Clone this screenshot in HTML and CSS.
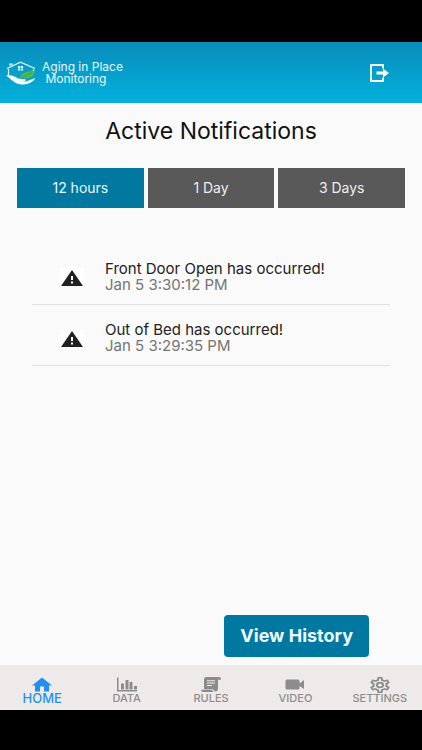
FILE: index.html
```html
<!DOCTYPE html>
<html lang="en">
<head>
<meta charset="utf-8">
<meta name="viewport" content="width=device-width, initial-scale=1">
<title>Aging in Place Monitoring</title>
<link rel="stylesheet" href="styles.css">
</head>
<body>
<div class="app">
  <header class="header">
    <a class="brand" href="#">
      <svg class="logo" viewBox="0 0 30 24" aria-hidden="true">
        <path d="M1 7.500 14.500 1.200 29 7.500M4 4.800V3H6V4.200M2.500 8V14.500M27.500 8V11" fill="none" stroke="#e9fbff" stroke-width="1.200"/>
        <path d="M12 5h2.200v2H12zm2.900 0h2.200v2h-2.200zM12 7.600h2.200v2H12zm2.900 0h2.200v2h-2.200z" fill="#e9fbff"/>
        <path d="M14 16.500C15 12 19 11 28.500 9.500 29 15 24 18.500 17 17z" fill="#54b948"/>
        <path d="M16 16.500Q21 15 26 11.500" fill="none" stroke="#2b8c52" stroke-width=".6"/>
        <path d="M0 14.500C5 13.500 9 15 12 17.500L19 18.200C20.500 18.800 20 20 18 20L13 19.600 20 20.600 29 17C28 21 22 23.500 16 23.500 8 23.500 6 18 0 14.500z" fill="#f4fdff"/>
      </svg>
      <span class="brand-name">Aging in Place<br>&nbsp;Monitoring</span>
    </a>
    <button class="logout" type="button" aria-label="Log out">
      <svg viewBox="0 0 20 18" aria-hidden="true">
        <path d="M13 4.500V1H1V17H13V13.500" fill="none" stroke="#fff" stroke-width="1.800" stroke-linejoin="round"/>
        <path d="M6.500 7.500H13V4.500L19 9 13 13.500V10.500H6.500z" fill="#fff"/>
      </svg>
    </button>
  </header>
  <main class="main">
    <h1 class="title">Active Notifications</h1>
    <div class="ranges">
      <button class="range active" type="button">12 hours</button>
      <button class="range" type="button">1 Day</button>
      <button class="range" type="button">3 Days</button>
    </div>
    <ul class="list">
      <li class="item">
        <span class="alert"><svg viewBox="0 0 22 16" aria-hidden="true"><path d="M0 16H22L11 0z" fill="#212121"/><path d="M10 6h2v4h-2zm0 5.500h2v2h-2z" fill="#fff"/></svg></span>
        <div class="text"><p class="event">Front Door Open has occurred!</p><p class="time">Jan 5 3:30:12 PM</p></div>
      </li>
      <li class="item">
        <span class="alert"><svg viewBox="0 0 22 16" aria-hidden="true"><path d="M0 16H22L11 0z" fill="#212121"/><path d="M10 6h2v4h-2zm0 5.500h2v2h-2z" fill="#fff"/></svg></span>
        <div class="text"><p class="event">Out of Bed has occurred!</p><p class="time">Jan 5 3:29:35 PM</p></div>
      </li>
    </ul>
    <button class="history" type="button">View History</button>
  </main>
  <nav class="tabs">
    <a class="tab current" href="#"><svg viewBox="0 0 20 14" aria-hidden="true"><path d="M10 0 20 8H17V14H12V9H8V14H3V8H0L10 0z"/></svg>HOME</a>
    <a class="tab" href="#"><svg viewBox="0 0 20 14" aria-hidden="true"><path d="M0 0H1.500V12.500H20V14H0zM4 6H7V12H4zM8.500 2.500H11.500V12H8.500zM12.500 4.500H15.500V12H12.500zM17 8.500H20V12H17z"/></svg>DATA</a>
    <a class="tab" href="#"><svg viewBox="0 -1 20 16" preserveAspectRatio="none" aria-hidden="true"><path d="M6-1H18Q20-1 20 1V2H17V11Q17 14.500 14 14.500L12 12H3V1.500Q3-1 6-1z"/><path d="M0 12.500H11Q11.500 15 14 15H3Q0 15 0 12.500z"/><path d="M6 3H14M6 5.500H14M6 8H11" fill="none" stroke="#eeeaea" stroke-width="1.100"/></svg>RULES</a>
    <a class="tab" href="#"><svg viewBox="0 0 20 14" aria-hidden="true"><path d="M2 2H13Q14.500 2 14.500 3.500V6L19 2.500V11.500L14.500 8.500V10.500Q14.500 12 13 12H2Q.5 12 .5 10.500V3.500Q.5 2 2 2z"/></svg>VIDEO</a>
    <a class="tab" href="#"><svg class="gear" viewBox="2 2 20 20" preserveAspectRatio="none" aria-hidden="true"><path d="M12 8a4 4 0 0 1 4 4 4 4 0 0 1-4 4 4 4 0 0 1-4-4 4 4 0 0 1 4-4m0 2a2 2 0 0 0-2 2 2 2 0 0 0 2 2 2 2 0 0 0 2-2 2 2 0 0 0-2-2m-2 12c-.25 0-.46-.18-.5-.42l-.37-2.650c-.63-.25-1.170-.59-1.690-.99l-2.490 1.010c-.22.08-.49 0-.61-.22l-2-3.460a.493.493 0 0 1 .12-.64l2.110-1.660L4.500 12l.07-1-2.110-1.630a.493.493 0 0 1-.12-.64l2-3.460c.12-.22.39-.31.61-.22l2.490 1c.52-.39 1.060-.73 1.690-.98l.37-2.650c.04-.24.25-.42.5-.42h4c.25 0 .46.18.5.42l.37 2.650c.63.25 1.170.59 1.690.98l2.490-1c.22-.09.49 0 .61.22l2 3.460c.13.22.07.49-.12.64L19.430 11l.07 1-.07 1 2.110 1.630c.19.15.25.42.12.64l-2 3.460c-.12.22-.39.31-.61.22l-2.490-1c-.52.39-1.060.73-1.690.98l-.37 2.650c-.04.24-.25.42-.5.42h-4m1.250-18l-.37 2.610c-1.200.25-2.260.89-3.030 1.780L5.440 7.350l-.75 1.300L6.800 10.200a6.400 6.400 0 0 0 0 3.600l-2.120 1.560.75 1.300 2.430-1.040c.77.88 1.820 1.520 3.010 1.760l.37 2.620h1.520l.37-2.610c1.190-.25 2.240-.89 3.010-1.770l2.430 1.040.75-1.300-2.120-1.550c.4-1.170.4-2.440 0-3.610l2.110-1.550-.75-1.300-2.410 1.040a5.420 5.420 0 0 0-3.030-1.770L12.750 4h-1.500z"/></svg>SETTINGS</a>
  </nav>
</div>
</body>
</html>
```
FILE: styles.css
```css
* { box-sizing: border-box; }

body {
  margin: 0;
  background: #000;
  font-family: Inter, Roboto, sans-serif;
}

button { border: 0; font: inherit; cursor: pointer; }
a { text-decoration: none; }
svg { display: block; }

.app {
  display: flex;
  flex-direction: column;
  min-height: 100vh;
  padding: 42px 0 40px;
}

.header {
  display: flex;
  align-items: center;
  justify-content: space-between;
  padding: 19px 32px 18px 6px;
  background: linear-gradient(#088cba, #04b1dc);
}

.brand {
  display: flex;
  align-items: center;
  gap: 6px;
  color: #e6f8fd;
}

.logo { width: 30px; height: 24px; }

.brand-name {
  font-size: 12px;
  line-height: 12px;
}

.logout { padding: 0; background: none; }
.logout svg { width: 20px; height: 18px; }

.main {
  flex: 1;
  display: flex;
  flex-direction: column;
  padding: 16px 17px 8px;
  background: #fafafa;
}

.title {
  margin: 0 0 24px;
  color: #111;
  font-size: 23px;
  font-weight: 400;
  line-height: 25px;
  text-align: center;
}

.ranges { display: flex; gap: 4px; }

.range {
  flex: 1;
  padding: 12px 0;
  background: #595959;
  color: #eee;
  font-size: 14px;
  line-height: 16px;
}

.range.active { background: #00789f; color: #eafaff; }

.list {
  margin: 36px 15px 24px;
  padding: 0;
  list-style: none;
}

.item {
  display: flex;
  align-items: center;
  gap: 21px;
  padding: 17px 0 11px 28px;
  border-bottom: 1px solid #e0e0e0;
}

.alert { padding: 2px 1px 0; background: #fff; }
.alert svg { width: 22px; height: 16px; }

.text { font-size: 15px; line-height: 16px; }
.event { margin: 0; color: #212121; }
.time { margin: 0; color: #757575; }

.history {
  align-self: flex-end;
  margin: auto 36px 0 0;
  padding: 12px 16px;
  border-radius: 4px;
  background: #00789f;
  color: #eefaff;
  font-size: 18px;
  font-weight: 700;
  line-height: 18px;
}

.tabs {
  display: flex;
  padding: 12px 0 6px;
  background: #eeeaea;
}

.tab {
  flex: 1;
  display: flex;
  flex-direction: column;
  align-items: center;
  color: #8c8c8c;
  font-size: 11px;
  font-weight: 500;
  line-height: 12px;
}

.tab svg { width: 20px; height: 15px; fill: currentColor; }
.tab .gear { height: 16px; margin-bottom: -1px; }
.tab.current { color: #2490ee; font-size: 13px; }
```
